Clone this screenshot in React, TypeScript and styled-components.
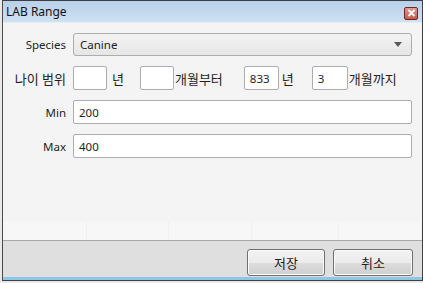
import { FC } from "react";
import styled, { createGlobalStyle } from "styled-components";

const GlobalStyle = createGlobalStyle`
  html, body {
    margin: 0;
    padding: 0;
    background: #e9e9e9;
  }
  body {
    font-family: "Noto Sans", "Noto Sans CJK KR", sans-serif;
    font-size: 12px;
    color: #1e1e1e;
  }
`;

const App: FC = () => {
  return (
    <>
      <GlobalStyle />
      <Window>
        <TitleBar>
          <h1 className="title">LAB Range</h1>
          <CloseButton>
            <svg width="9" height="8" viewBox="0 0 9 8">
              <path d="M1.5 1 L7.5 7 M7.5 1 L1.5 7" stroke="#fff" strokeWidth="1.8" />
            </svg>
          </CloseButton>
        </TitleBar>
        <Content>
          <Form>
            <Label>Species</Label>
            <Select>
              <span>Canine</span>
              <svg width="8" height="5" viewBox="0 0 8 5">
                <path d="M0 0 H8 L4 5 Z" fill="#5a5a5a" />
              </svg>
            </Select>

            <Label $korean>나이 범위</Label>
            <AgeRow>
              <SmallInput $width={34} />
              <Unit $before={5}>년</Unit>
              <SmallInput $width={34} $before={16} />
              <Unit $before={1}>개월부터</Unit>
              <SmallInput $width={35} $before={21} value="833" />
              <Unit $before={3}>년</Unit>
              <SmallInput $width={36} $before={18} value="3" />
              <Unit $before={1}>개월까지</Unit>
            </AgeRow>

            <Label>Min</Label>
            <TextInput value="200" />

            <Label>Max</Label>
            <TextInput value="400" />
          </Form>
          <GridStrip>
            {[86, 85, 85, 90, 85].map((w, i) => (
              <div key={i} style={{ width: w }} />
            ))}
          </GridStrip>
        </Content>
        <Footer>
          <Button $width={78}>저장</Button>
          <Button $width={80}>취소</Button>
        </Footer>
      </Window>
    </>
  );
};

export default App;

const Window = styled.div`
  box-sizing: border-box;
  display: flex;
  flex-direction: column;
  margin-left: 2px;
  width: 421px;
  height: 281px;
  border: 1px solid #3f3f3f;
  border-left-color: #4a4a4a;
  background: #f4f4f4;
`;

const TitleBar = styled.div`
  display: flex;
  align-items: center;
  justify-content: space-between;
  height: 21px;
  padding: 0 4px 0 3px;
  background: linear-gradient(#b8d0ea, #c6daef 60%, #d0e1f3);
  .title {
    margin: 0;
    font-size: 12px;
    font-weight: 400;
    color: #111;
    line-height: 1;
    padding-top: 1px;
  }
`;

const CloseButton = styled.div`
  display: flex;
  align-items: center;
  justify-content: center;
  box-sizing: border-box;
  width: 14px;
  height: 13px;
  margin-top: 3px;
  border: 1px solid #6b2a2a;
  border-radius: 2px;
  background: linear-gradient(#e49a8c, #c8594a);
`;

const Content = styled.div`
  flex: 1;
  display: flex;
  flex-direction: column;
  justify-content: space-between;
  padding: 10px 0 0 0;
  background: #f4f4f4;
  border-top: 1px solid #e8eef5;
`;

const Form = styled.div`
  display: grid;
  grid-template-columns: 63px 1fr;
  column-gap: 7px;
  row-gap: 10px;
  align-items: center;
  padding-right: 10px;
`;

const Label = styled.div<{ $korean?: boolean }>`
  text-align: right;
  white-space: nowrap;
  font-size: ${({ $korean }) => ($korean ? "13px" : "11.5px")};
  color: #1e1e1e;
`;

const Select = styled.div`
  box-sizing: border-box;
  display: flex;
  align-items: center;
  justify-content: space-between;
  height: 23px;
  padding: 0 9px 0 6px;
  border: 1px solid #acacac;
  border-radius: 3px;
  background: linear-gradient(#f3f3f3, #e6e6e6);
  font-size: 11.5px;
`;

const AgeRow = styled.div`
  display: flex;
  align-items: center;
`;

const SmallInput = styled.input.attrs({ readOnly: true })<{
  $width: number;
  $before?: number;
}>`
  box-sizing: border-box;
  width: ${({ $width }) => $width}px;
  height: 24px;
  margin: 0 0 0 ${({ $before }) => $before || 0}px;
  padding: 0 5px;
  border: 1px solid #abadb3;
  border-radius: 2px;
  background: #fff;
  font-family: "Noto Sans", sans-serif;
  font-size: 11.5px;
  color: #1e1e1e;
  outline: none;
`;

const Unit = styled.span<{ $before: number }>`
  margin-left: ${({ $before }) => $before}px;
  font-size: 13px;
  white-space: nowrap;
`;

const TextInput = styled.input.attrs({ readOnly: true })`
  box-sizing: border-box;
  width: 100%;
  height: 24px;
  margin: 0;
  padding: 0 5px;
  border: 1px solid #abadb3;
  border-radius: 2px;
  background: #fff;
  font-family: "Noto Sans", sans-serif;
  font-size: 11.5px;
  color: #1e1e1e;
  outline: none;
`;

const GridStrip = styled.div`
  display: flex;
  height: 18px;
  background: #f7f7f7;
  div {
    height: 100%;
    border-right: 1px solid #f0f0f0;
  }
`;

const Footer = styled.div`
  display: flex;
  justify-content: flex-end;
  align-items: flex-start;
  gap: 8px;
  height: 40px;
  box-sizing: border-box;
  padding: 8px 9px 0 0;
  border-top: 1px solid #a9a9a9;
  border-bottom: 3px solid #8fc6e6;
  background: #dfdfdf;
`;

const Button = styled.div<{ $width: number }>`
  box-sizing: border-box;
  display: flex;
  align-items: center;
  justify-content: center;
  width: ${({ $width }) => $width}px;
  height: 27px;
  border: 1px solid #707070;
  border-radius: 3px;
  background: linear-gradient(#f3f3f3 0%, #ebebeb 50%, #dddddd 51%, #cfcfcf 100%);
  box-shadow: inset 0 0 0 1px #fbfbfb;
  font-size: 13px;
  color: #1e1e1e;
`;
